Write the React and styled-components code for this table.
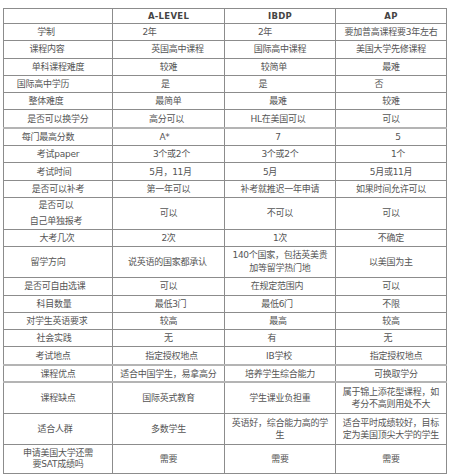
import React from "react";
import styled, { createGlobalStyle } from "styled-components";

const Global = createGlobalStyle`
  html, body { margin: 0; padding: 0; background: #fff; }
  body { font-family: "DejaVu Sans", "Noto Sans CJK SC", sans-serif; }
`;

const Page = styled.div`
  padding: 8px 0 0 3px;
  width: 450px;
  box-sizing: border-box;
`;

const Table = styled.table`
  border-collapse: collapse;
  table-layout: fixed;
  width: 443px;
  border: 1px solid #8c8c8c;
  color: #555;
  font-size: 9px;
  letter-spacing: -0.25px;
`;

const Head = styled.th`
  padding: 0;
  border: 1px solid #8c8c8c;
  font-family: "DejaVu Sans", sans-serif;
  font-weight: bold;
  font-size: 8.5px;
  letter-spacing: 0.3px;
  color: #444;
  text-align: center;
`;

const HeadBox = styled.div`
  height: 14px;
  line-height: 14px;
  overflow: hidden;
`;

const Cell = styled.td`
  padding: 0;
  border: 1px solid #8c8c8c;
  border-top: ${(p) => (p.$thickTop ? "2px solid #b4b4b4" : "1px solid #8c8c8c")};
  border-bottom: ${(p) => (p.$thickBottom ? "2px solid #b4b4b4" : "1px solid #8c8c8c")};
  vertical-align: middle;
`;

const Box = styled.div`
  height: ${(p) => p.$h}px;
  display: flex;
  flex-direction: column;
  justify-content: center;
  align-items: center;
  padding-left: ${(p) => (p.$shift > 0 ? p.$shift * 2 : 0)}px;
  padding-right: ${(p) => (p.$shift < 0 ? -p.$shift * 2 : 0)}px;
  white-space: nowrap;
  overflow: hidden;
`;

const Line = styled.span`
  display: block;
  height: ${(p) => p.$lh}px;
  line-height: ${(p) => p.$lh}px;
  text-align: center;
`;

const Tail = styled.p`
  margin: 4px 0 0 8px;
  font-family: "Noto Sans CJK SC", sans-serif;
  font-size: 9px;
  line-height: 12px;
  color: #777;
  white-space: nowrap;
`;

const c = (t, s = 0) => ({ t, s });

const rows = [
  { cells: [c("学制", -12), c("2年", -19), c("2年", -15), c("要加普高课程要3年左右")] },
  { cells: [c("课程内容", -11), c("英国高中课程", 9), c("国际高中课程"), c("美国大学先修课程")] },
  { cells: [c("单科课程难度"), c("较难"), c("较简单", -6), c("最难")] },
  { cells: [c("国际高中学历", -15), c("是", -3), c("是", -17), c("否", -12)] },
  { cells: [c("整体难度", -12), c("最简单"), c("最难", -2), c("较难")] },
  { cells: [c("是否可以换学分"), c("高分可以", -2), c("HL在美国可以", -2), c("可以")] },
  { thickTop: true, cells: [c("每门最高分数", -10), c("A*", -4), c("7", -2), c("5", 7)] },
  { cells: [c("考试paper"), c("3个或2个", 3), c("3个或2个"), c("1个", 7)] },
  { cells: [c("考试时间", -4), c("5月，11月", 2), c("5月", -10), c("5月或11月")] },
  { cells: [c("是否可以补考"), c("第一年可以"), c("补考就推迟一年申请"), c("如果时间允许可以")] },
  { h: 31, lh: 16, cells: [c(["是否可以", "自己单独报考"], -2), c("可以"), c("不可以"), c("可以")] },
  { cells: [c("大考几次", -1), c("2次"), c("1次"), c("不确定")] },
  { h: 30, lh: 13, cells: [c("留学方向", -10), c("说英语的国家都承认", -1), c(["140个国家，包括英美贵", "加等留学热门地"]), c("以美国为主")] },
  { cells: [c("是否可自由选课", -3), c("可以"), c("在规定范围内", -3), c("可以")] },
  { cells: [c("科目数量", -4), c("最低3门", 2), c("最低6门", -3), c("不限")] },
  { cells: [c("对学生英语要求", -1), c("较高"), c("最高", -2), c("较高")] },
  { cells: [c("社会实践", -4), c("无"), c("有", -8), c("无", -3)] },
  { cells: [c("考试地点", -5), c("指定授权地点", 3), c("IB学校", -1), c("指定授权地点", 5)] },
  { thickTop: true, thickBottom: true, h: 15.5, cells: [c("课程优点"), c("适合中国学生，易拿高分"), c("培养学生综合能力"), c("可换取学分", 5)] },
  { h: 30, lh: 12, cells: [c("课程缺点"), c("国际英式教育"), c("学生课业负担重"), c(["属于锦上添花型课程，如", "考分不高则用处不大"])] },
  { h: 30, lh: 12, cells: [c("适合人群", -3), c("多数学生"), c(["英语好，综合能力高的学", "生"]), c(["适合平时成绩较好，目标", "定为美国顶尖大学的学生"])] },
  { h: 28, lh: 11, cells: [c(["申请美国大学还需", "要SAT成绩吗"]), c("需要"), c("需要"), c("需要")] },
];

export default function App() {
  return (
    <Page>
      <Global />
      <Table>
        <colgroup>
          <col style={{ width: 109 }} />
          <col style={{ width: 112 }} />
          <col style={{ width: 111 }} />
          <col style={{ width: 111 }} />
        </colgroup>
        <thead>
          <tr>
            <Head><HeadBox /></Head>
            <Head><HeadBox>A-LEVEL</HeadBox></Head>
            <Head><HeadBox>IBDP</HeadBox></Head>
            <Head><HeadBox>AP</HeadBox></Head>
          </tr>
        </thead>
        <tbody>
          {rows.map((r, i) => {
            const h = r.h || 16.3;
            const lh = r.lh || 16;
            return (
              <tr key={i}>
                {r.cells.map((cell, j) => {
                  const lines = Array.isArray(cell.t) ? cell.t : [cell.t];
                  return (
                    <Cell key={j} $thickTop={r.thickTop} $thickBottom={r.thickBottom}>
                      <Box $h={h} $shift={cell.s}>
                        {lines.map((line, k) => (
                          <Line key={k} $lh={lh}>
                            {line}
                          </Line>
                        ))}
                      </Box>
                    </Cell>
                  );
                })}
              </tr>
            );
          })}
        </tbody>
      </Table>
      <Tail>从上表可以看出，三大国际课程各有特点，学生应结合自身情况与留学目标，选择最适合自己的课程体系。</Tail>
    </Page>
  );
}
